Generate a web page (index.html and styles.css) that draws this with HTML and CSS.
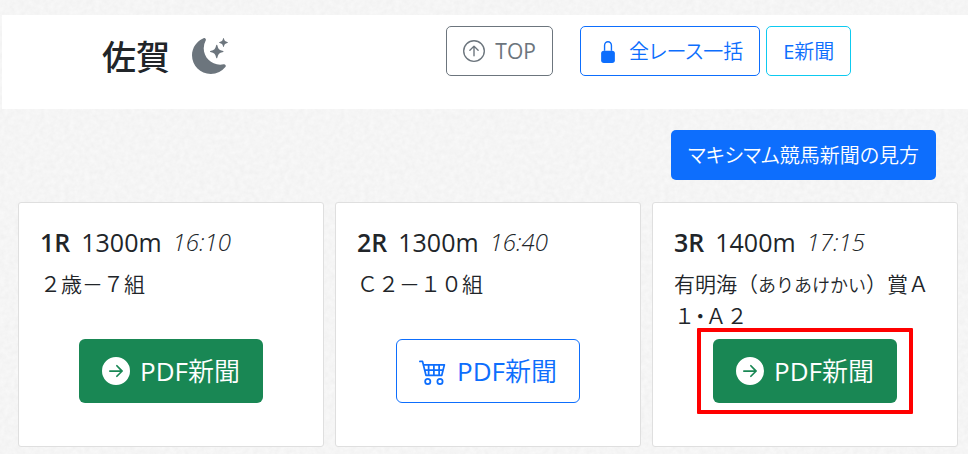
FILE: index.html
```html
<!DOCTYPE html>
<html lang="ja">
<head>
  <meta charset="utf-8">
  <meta name="viewport" content="width=device-width, initial-scale=1">
  <title>佐賀</title>
  <link rel="stylesheet" href="styles.css">
</head>
<body>
  <header class="header">
    <h1 class="place">
      佐賀
      <svg class="icon-moon" viewBox="0 0 16 16" fill="currentColor" aria-hidden="true">
        <path d="M6 .278a.768.768 0 0 1 .08.858 7.208 7.208 0 0 0-.878 3.46c0 4.021 3.278 7.277 7.318 7.277.527 0 1.04-.055 1.533-.16a.787.787 0 0 1 .81.316.733.733 0 0 1-.031.893A8.349 8.349 0 0 1 8.344 16C3.734 16 0 12.286 0 7.71 0 4.266 2.114 1.312 5.124.06A.752.752 0 0 1 6 .278z"/>
        <path d="M10.794 3.148a.217.217 0 0 1 .412 0l.387 1.162c.173.518.579.924 1.097 1.097l1.162.387a.217.217 0 0 1 0 .412l-1.162.387a1.734 1.734 0 0 0-1.097 1.097l-.387 1.162a.217.217 0 0 1-.412 0l-.387-1.162A1.734 1.734 0 0 0 9.31 6.593l-1.162-.387a.217.217 0 0 1 0-.412l1.162-.387a1.734 1.734 0 0 0 1.097-1.097l.387-1.162zM13.863.099a.145.145 0 0 1 .274 0l.258.774c.115.346.386.617.732.732l.774.258a.145.145 0 0 1 0 .274l-.774.258a1.156 1.156 0 0 0-.732.732l-.258.774a.145.145 0 0 1-.274 0l-.258-.774a1.156 1.156 0 0 0-.732-.732l-.774-.258a.145.145 0 0 1 0-.274l.774-.258c.346-.115.617-.386.732-.732L13.863.1z"/>
      </svg>
    </h1>
    <nav class="header-nav">
      <a class="btn btn-outline-secondary btn-top" href="#">
        <svg class="icon" viewBox="0 0 16 16" fill="currentColor" aria-hidden="true">
          <path fill-rule="evenodd" d="M1 8a7 7 0 1 0 14 0A7 7 0 0 0 1 8zm15 0A8 8 0 1 1 0 8a8 8 0 0 1 16 0zm-7.5 3.5a.5.5 0 0 1-1 0V5.707L5.354 7.854a.5.5 0 1 1-.708-.708l3-3a.5.5 0 0 1 .708 0l3 3a.5.5 0 0 1-.708.708L8.5 5.707V11.5z"/>
        </svg>
        TOP
      </a>
      <a class="btn btn-kana btn-outline-primary" href="#">
        <svg class="icon" viewBox="0 0 16 16" fill="currentColor" aria-hidden="true">
          <path d="M5 7h6a2 2 0 0 1 2 2v5a2 2 0 0 1-2 2H5a2 2 0 0 1-2-2V9a2 2 0 0 1 2-2z"/>
          <path d="M5.500 7V3.200a2.500 2.700 0 0 1 5 0V7" fill="none" stroke="currentColor"/>
        </svg>
        全レース一括
      </a>
      <a class="btn btn-kana btn-outline-info" href="#">E新聞</a>
    </nav>
  </header>

  <main>
    <div class="guide">
      <a class="btn btn-kana btn-primary" href="#">マキシマム競馬新聞の見方</a>
    </div>

    <div class="races">
      <section class="card">
        <h2 class="race-title"><b>1R</b> <span>1300m</span> <time>16:10</time></h2>
        <p class="race-name">２歳－７組</p>
        <div class="race-link">
          <a class="btn btn-lg btn-success" href="#">
            <svg class="icon-lg" viewBox="0 0 16 16" fill="currentColor" aria-hidden="true">
              <path d="M8 0a8 8 0 1 1 0 16A8 8 0 0 1 8 0zM4.500 7.500a.5.5 0 0 0 0 1h5.793l-2.147 2.146a.5.5 0 0 0 .708.708l3-3a.5.5 0 0 0 0-.708l-3-3a.5.5 0 1 0-.708.708L10.293 7.500H4.500z"/>
            </svg>
            PDF新聞
          </a>
        </div>
      </section>

      <section class="card">
        <h2 class="race-title"><b>2R</b> <span>1300m</span> <time>16:40</time></h2>
        <p class="race-name">Ｃ２－１０組</p>
        <div class="race-link">
          <a class="btn btn-lg btn-outline-primary" href="#">
            <svg class="icon-lg" viewBox="0 0 16 16" fill="currentColor" aria-hidden="true">
              <path d="M0 2.500A.5.5 0 0 1 .5 2H2a.5.5 0 0 1 .485.379L2.890 4H14.500a.5.5 0 0 1 .485.621l-1.500 6A.5.5 0 0 1 13 11H4a.5.5 0 0 1-.485-.379L1.610 3H.5a.5.5 0 0 1-.5-.5zM3.140 5l.5 2H5V5H3.140zM6 5v2h2V5H6zm3 0v2h2V5H9zm3 0v2h1.360l.5-2H12zm1.110 3H12v2h.610l.5-2zM11 8H9v2h2V8zM8 8H6v2h2V8zM5 8H3.890l.5 2H5V8zm0 5a1 1 0 1 0 0 2 1 1 0 0 0 0-2zm-2 1a2 2 0 1 1 4 0 2 2 0 0 1-4 0zm9-1a1 1 0 1 0 0 2 1 1 0 0 0 0-2zm-2 1a2 2 0 1 1 4 0 2 2 0 0 1-4 0z"/>
            </svg>
            PDF新聞
          </a>
        </div>
      </section>

      <section class="card">
        <h2 class="race-title"><b>3R</b> <span>1400m</span> <time>17:15</time></h2>
        <p class="race-name">有明海（<span class="kana">ありあけかい</span>）賞Ａ１<span class="dot">・</span>Ａ２</p>
        <div class="race-link">
          <a class="btn btn-lg btn-success marked" href="#">
            <svg class="icon-lg" viewBox="0 0 16 16" fill="currentColor" aria-hidden="true">
              <path d="M8 0a8 8 0 1 1 0 16A8 8 0 0 1 8 0zM4.500 7.500a.5.5 0 0 0 0 1h5.793l-2.147 2.146a.5.5 0 0 0 .708.708l3-3a.5.5 0 0 0 0-.708l-3-3a.5.5 0 1 0-.708.708L10.293 7.500H4.500z"/>
            </svg>
            PDF新聞
          </a>
        </div>
      </section>
    </div>
  </main>
</body>
</html>
```
FILE: styles.css
```css
* {
  box-sizing: border-box;
}

body {
  margin: 0;
  padding-top: 15px;
  color: #212529;
  font-family: "Open Sans", "Noto Sans CJK JP DemiLight", "Noto Sans CJK JP Light", "Noto Sans CJK JP", sans-serif;
  font-size: 21px;
  line-height: 32px;
  /* paper texture */
  background: #f5f5f5 url("data:image/svg+xml,%3Csvg xmlns='http://www.w3.org/2000/svg' width='300' height='300'%3E%3Cfilter id='p' x='0' y='0' width='100%25' height='100%25' color-interpolation-filters='sRGB'%3E%3CfeTurbulence type='fractalNoise' baseFrequency='.2' numOctaves='3' stitchTiles='stitch'/%3E%3CfeColorMatrix values='.04 0 0 0 .94 .04 0 0 0 .94 .04 0 0 0 .94 0 0 0 0 1'/%3E%3C/filter%3E%3Crect width='300' height='300' filter='url(%23p)'/%3E%3C/svg%3E");
}

.header {
  display: grid;
  grid-template-columns: 46% 1fr;
  margin-left: 2px;
  padding: 11px 0 33px;
  background: #fff;
}

.place {
  display: flex;
  align-items: center;
  gap: 22px;
  margin: 0;
  padding: 10px 0 0 100px;
  font-family: "Noto Sans CJK JP", sans-serif;
  font-size: 34px;
  font-weight: 500;
}

.icon-moon {
  width: 36px;
  height: 36px;
  color: #6c757d;
}

.header-nav {
  display: flex;
  gap: 6px;
}

.btn {
  display: inline-flex;
  align-items: center;
  gap: 10px;
  padding: 8px 16px;
  border: 1px solid transparent;
  border-radius: 5px;
  text-decoration: none;
  white-space: nowrap;
}

.btn-kana {
  padding: 9px 16px 7px;
  font-size: 20px;
  font-feature-settings: "palt";
}

.btn-top {
  margin-right: 21px;
}

.btn-lg {
  padding: 11px 22px;
  border-radius: 6px;
  font-size: 26px;
  line-height: 40px;
}

.btn-primary {
  background: #0d6efd;
  color: #fff;
}

.btn-success {
  background: #198754;
  color: #fff;
}

.btn-outline-primary {
  border-color: #0d6efd;
  color: #0d6efd;
}

.btn-outline-secondary {
  border-color: #6c757d;
  color: #6c757d;
}

.btn-outline-info {
  border-color: #0dcaf0;
  color: #0d6efd;
}

.icon {
  width: 22px;
  height: 22px;
}

.icon-lg {
  width: 28px;
  height: 28px;
}

.guide {
  display: flex;
  justify-content: flex-end;
  padding: 21px 32px 22px;
}

.races {
  display: grid;
  grid-template-columns: repeat(3, 1fr);
  gap: 11px;
  padding: 0 10px 8px 18px;
}

.card {
  padding: 23px 21px 43px;
  border: 1px solid #dfdfdf;
  border-radius: 3px;
  background: #fff;
}

.race-title {
  display: flex;
  gap: 11px;
  margin: 0 0 10px;
  font-size: 25px;
  font-weight: 400;
}

.race-title b {
  font-weight: 600;
}

.race-title time {
  font-size: 24px;
  font-style: italic;
  font-weight: 300;
}

.race-name {
  min-height: 64px;
  margin: 0 0 7px;
}

.kana {
  font-size: 18px;
  line-height: 1;
}

.dot {
  font-feature-settings: "halt";
}

.race-link {
  display: flex;
  justify-content: center;
}

/* red frame around the highlighted button */
.marked {
  position: relative;
}

.marked::after {
  content: "";
  position: absolute;
  inset: -12px -17px;
  border: 4px solid #f00;
  border-radius: 1px;
}
```
